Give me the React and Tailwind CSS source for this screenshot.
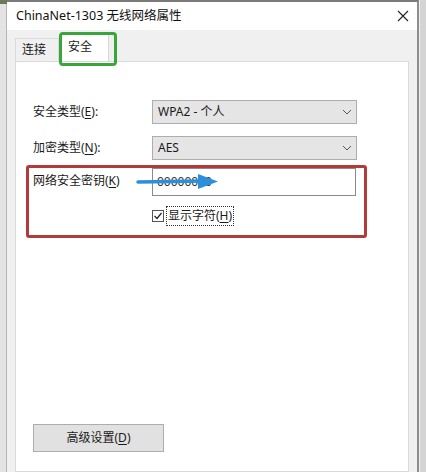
import React from 'react';

const Chevron = () => (
  <svg width="10" height="6" viewBox="0 0 10 6" className="shrink-0">
    <path d="M1 1 L5 5 L9 1" fill="none" stroke="#555" strokeWidth="1" />
  </svg>
);

const Select = ({ value }) => (
  <div className="w-[205px] h-[24px] bg-[#e5e5e5] border border-[#adadad] flex items-center justify-between pl-[5px] pr-[4px]">
    <span>{value}</span>
    <Chevron />
  </div>
);

const Hot = ({ k }) => <span className="underline underline-offset-2">{k}</span>;

export default function App() {
  return (
    <div className="relative w-[426px] h-[472px] overflow-hidden flex bg-[#dcdcdc] font-['Noto_Sans','Noto_Sans_CJK_SC',sans-serif] text-[12px] text-[#1a1a1a] leading-none">
      {/* left strip of window behind */}
      <div className="w-[7px] flex flex-col">
        <div className="h-[4px] bg-[#6b7a5a]" />
        <div className="flex-1 border-r border-[#b5b5b5] bg-[#e3e3e3]" />
      </div>

      {/* dialog */}
      <div className="w-[412px] flex flex-col border-t-2 border-t-[#7a7a7a] border-r-2 border-r-[#8d8d8d]">
        <div className="h-[28px] bg-white flex items-center justify-between pl-[9px] pr-[8px]">
          <span className="text-[12.5px] text-[#111]">ChinaNet-1303 无线网络属性</span>
          <svg width="12" height="12" viewBox="0 0 12 12">
            <path d="M1 1 L11 11 M11 1 L1 11" stroke="#222" strokeWidth="1.1" />
          </svg>
        </div>

        <div className="flex-1 bg-[#f0f0f0] pl-[8px] pr-[8px] flex flex-col">
          {/* tabs */}
          <div className="h-[31px] flex items-end">
            <div className="w-[44px] h-[23px] border border-b-0 border-[#d9d9d9] bg-[#f0f0f0] flex items-center pl-[6px]">
              连接
            </div>
            <div className="w-[50px] h-[28px] border border-b-0 border-[#d9d9d9] bg-white flex items-center pl-[8px] pb-[4px] relative top-[1px]">
              安全
            </div>
          </div>

          {/* panel */}
          <div className="relative flex-1 bg-white border border-[#d9d9d9] pl-[17px] pt-[38px]">
            <div className="flex items-center">
              <span className="w-[119px]">安全类型(<Hot k="E" />):</span>
              <Select value="WPA2 - 个人" />
            </div>
            <div className="flex items-center mt-[12px]">
              <span className="w-[119px]">加密类型(<Hot k="N" />):</span>
              <Select value="AES" />
            </div>
            <div className="flex items-center mt-[10px]">
              <span className="w-[119px] -mt-[4px]">网络安全密钥(<Hot k="K" />)</span>
              <div className="w-[204px] h-[28px] border border-[#8a8a8a] bg-white flex items-center pl-[4px] -mt-[2px] text-[#333]">
                00000000
              </div>
            </div>
            <div className="flex items-center mt-[10px] pl-[119px] h-[19px]">
              <div className="w-[12px] h-[12px] border border-[#555] bg-white flex items-center justify-center">
                <svg width="10" height="10" viewBox="0 0 10 10">
                  <path d="M1.5 5 L4 7.5 L8.5 2" fill="none" stroke="#222" strokeWidth="1.2" />
                </svg>
              </div>
              <span className="ml-[2px] px-[1px] py-[3px] border border-dotted border-[#333]">
                显示字符(<Hot k="H" />)
              </span>
            </div>

            <button className="mt-[199px] w-[131px] h-[28px] bg-[#e1e1e1] border border-[#adadad] flex items-center justify-center">
              高级设置(<Hot k="D" />)
            </button>

            {/* red annotation */}
            <div className="absolute left-[10px] top-[103px] w-[341px] h-[73px] border-[3px] border-[#b23b39] rounded-[3px]" />
          </div>
        </div>
      </div>

      <div className="flex-1 bg-[#d4d4d4] border-l border-[#f0f0f0]" />

      {/* green annotation on tab */}
      <div className="absolute left-[59px] top-[32px] w-[58px] h-[34px] border-[3px] border-[#3aa53a] rounded-[4px]" />

      {/* blue arrow */}
      <svg className="absolute left-[136px] top-[173px]" width="84" height="18" viewBox="0 0 84 18">
        <path d="M2 9 L66 8" stroke="#2d8fdc" strokeWidth="3.5" strokeLinecap="round" />
        <path d="M62 1 L82 8.5 L62 16 Z" fill="#2d8fdc" />
      </svg>
    </div>
  );
}
